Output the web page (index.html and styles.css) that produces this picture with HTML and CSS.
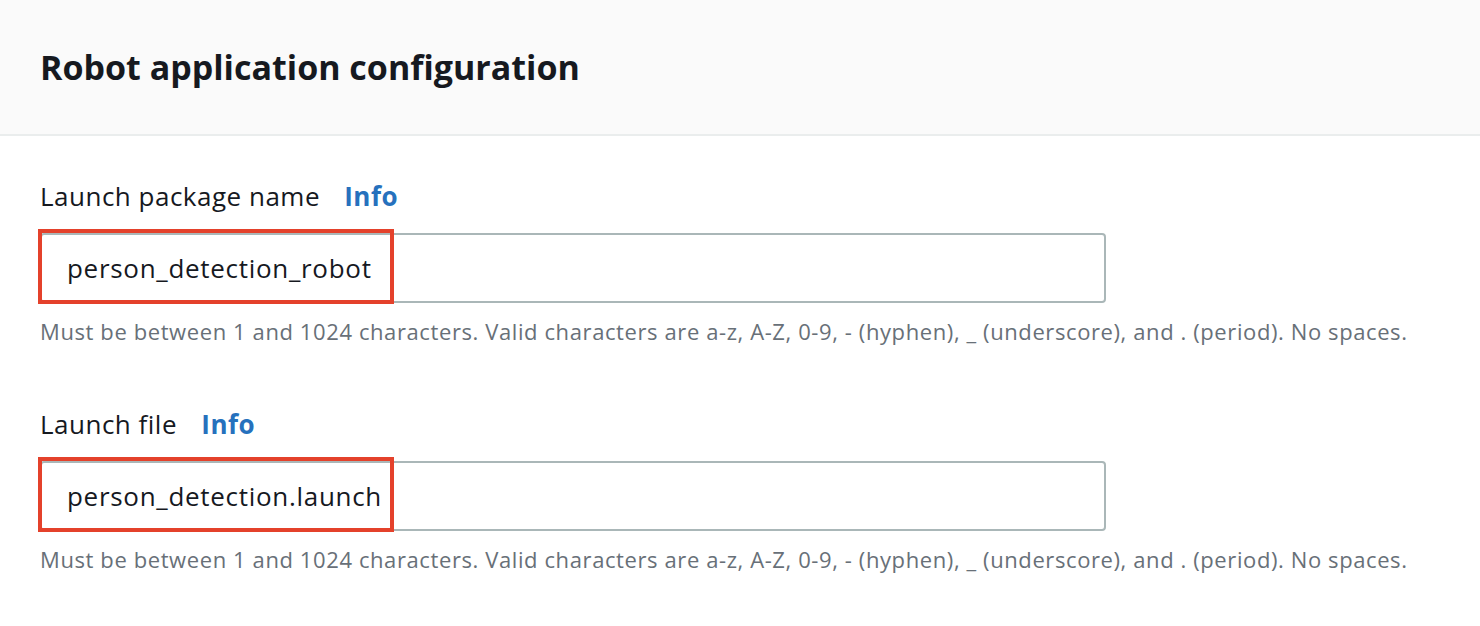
FILE: index.html
```html
<!DOCTYPE html>
<html lang="en">
<head>
<meta charset="utf-8">
<title>Robot application configuration</title>
<link rel="stylesheet" href="styles.css">
</head>
<body>
<section class="panel">
  <header class="panel-header">
    <h2 class="panel-title">Robot application configuration</h2>
  </header>
  <div class="panel-body">
    <div class="field">
      <div class="field-label">Launch package name <a class="info" href="#">Info</a></div>
      <div class="input-wrap">
        <div class="input">person_detection_robot</div>
        <div class="highlight"></div>
      </div>
      <div class="hint">Must be between 1 and 1024 characters. Valid characters are a-z, A-Z, 0-9, - (hyphen), _ (underscore), and . (period). No spaces.</div>
    </div>
    <div class="field">
      <div class="field-label">Launch file <a class="info" href="#">Info</a></div>
      <div class="input-wrap">
        <div class="input">person_detection.launch</div>
        <div class="highlight"></div>
      </div>
      <div class="hint">Must be between 1 and 1024 characters. Valid characters are a-z, A-Z, 0-9, - (hyphen), _ (underscore), and . (period). No spaces.</div>
    </div>
  </div>
</section>
</body>
</html>
```
FILE: styles.css
```css
html, body {
  margin: 0;
  padding: 0;
  background: #ffffff;
}
body {
  font-family: "Open Sans", "Noto Sans", Arial, sans-serif;
  color: #16191f;
}
.panel-header {
  background: #fafafa;
  height: 134px;
  border-bottom: 2px solid #eaeded;
  display: flex;
  align-items: center;
  padding-left: 40px;
}
.panel-title {
  margin: 0;
  font-size: 34px;
  font-weight: 700;
  line-height: 40px;
}
.panel-body {
  padding: 42px 40px 0 40px;
}
.field {
  margin-bottom: 60px;
}
.field-label {
  font-size: 26px;
  line-height: 36px;
  letter-spacing: 0.5px;
  margin-bottom: 19px;
}
.info {
  color: #2671bd;
  font-weight: 700;
  text-decoration: none;
  margin-left: 17px;
}
.input-wrap {
  position: relative;
  width: 1066px;
}
.input {
  box-sizing: border-box;
  height: 70px;
  border: 2px solid #aab7b8;
  border-radius: 4px;
  padding-left: 25px;
  font-size: 26px;
  letter-spacing: 0.7px;
  display: flex;
  align-items: center;
}
.highlight {
  position: absolute;
  left: -2px;
  top: -4px;
  width: 356px;
  height: 75px;
  box-sizing: border-box;
  border: 4px solid #e4412b;
}
.hint {
  margin-top: 13px;
  font-size: 22px;
  line-height: 30px;
  letter-spacing: 0.6px;
  color: #687078;
}
```
